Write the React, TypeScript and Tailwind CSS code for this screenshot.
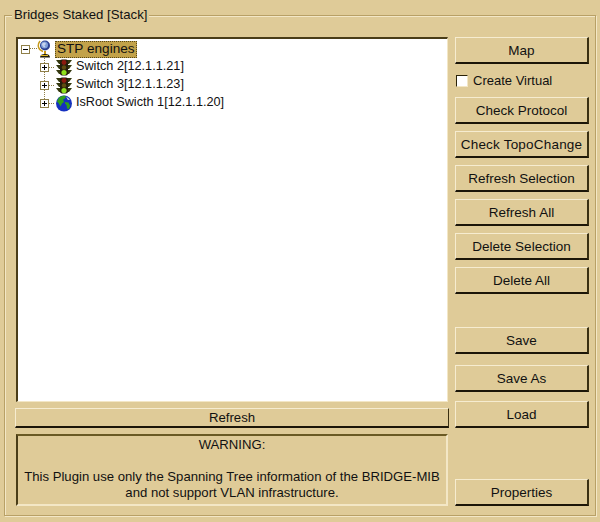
import React from "react";

const font = "font-['Liberation_Sans',Arial,sans-serif]";

const Btn: React.FC<{ label: string; className?: string }> = ({ label, className = "" }) => (
  <button
    className={`w-[134px] h-[27px] shrink-0 pt-[2px] flex items-center justify-center bg-[#dfcb98] border-t border-l border-t-[#f6ecd0] border-l-[#f6ecd0] border-b-2 border-r-2 border-b-[#1c1608] border-r-[#3a3012] text-[13.500px] text-[#111] ${className}`}
  >
    {label}
  </button>
);

const Expander: React.FC<{ open?: boolean }> = ({ open }) => (
  <svg width="9" height="9" viewBox="0 0 9 9" className="shrink-0 bg-white">
    <rect x="0.5" y="0.5" width="8" height="8" fill="#fff" stroke="#8f7f48" />
    <path d="M2 4.5h5" stroke="#000" />
    {!open && <path d="M4.5 2v5" stroke="#000" />}
  </svg>
);

const TrafficLight = () => (
  <svg width="16" height="17" viewBox="0 0 16 17" className="shrink-0">
    <path d="M0 1h16l-3 4H3zM0 6h16l-3 4H3zM0 11h16l-3 4H3z" fill="#34380f" />
    <rect x="4" y="0.500" width="8" height="16" rx="2" fill="#241e0c" />
    <circle cx="8" cy="3.500" r="2.400" fill="#8c1a0e" />
    <circle cx="8" cy="8.500" r="2.200" fill="#5f4d10" />
    <circle cx="8" cy="13.500" r="2.600" fill="#8fe01c" />
  </svg>
);

const Globe = () => (
  <svg width="18" height="17" viewBox="0 0 18 17" className="shrink-0">
    <circle cx="9" cy="8.500" r="8" fill="#1530c0" />
    <path d="M4 2.500c2-1.500 5-2 7-1.500l-1 2.500-2 1 1 2.500-2 1.500-1.500 3L3.500 8 2 6.500zM10 7l3.500.500 1 2.500 1-1-1.500 5-2-.500-.500-3.500-1.500-1.500z" fill="#2fa01c" />
    <path d="M11 1.500l4 3-2 .500z" fill="#dfeee0" />
  </svg>
);

const StandGlobe = () => (
  <svg width="16" height="18" viewBox="0 0 16 18" className="shrink-0">
    <path d="M3 1c-3 4-2 9 3 10.500" fill="none" stroke="#c69a1c" strokeWidth="1.500" />
    <circle cx="8" cy="5.500" r="5" fill="#2c3f90" />
    <circle cx="7.500" cy="5" r="3.500" fill="#7f9fd8" />
    <path d="M5.500 3l2.500-.500 1 1.500-1.500 1.500 1 1.500-1.500 .500-2-2.500z" fill="#c8d4ee" />
    <path d="M7 11h2v3H7z" fill="#c89a14" />
    <path d="M3 17.500c0-2.500 2-3.500 5-3.500s5 1 5 3.500z" fill="#1d1a08" />
    <path d="M4 15.500h7" stroke="#e0b820" />
  </svg>
);

const Row: React.FC<{ icon: React.ReactNode; label: string }> = ({ icon, label }) => (
  <div className="h-[18px] flex items-center pl-[19px]">
    <Expander />
    <span className="w-[6px] shrink-0" />
    <span className="w-[18px] flex justify-center shrink-0">{icon}</span>
    <span className="ml-[3px] text-[12.700px] text-[#111] whitespace-nowrap">{label}</span>
  </div>
);

export default function App() {
  return (
    <div className={`w-[600px] h-[522px] bg-[#dfcb98] pt-[15px] px-[4px] ${font}`}>
      <div className="relative w-[592px] h-[501px] border border-[#b8a066] shadow-[inset_1px_1px_0_#f3e7c6,1px_1px_0_#f3e7c6] pl-[11px] pt-[21px] flex gap-[5px]">
        <span className="absolute left-[7px] -top-[9px] px-[2px] bg-[#dfcb98] text-[13.200px] leading-[16px] text-[#111]">
          Bridges Staked [Stack]
        </span>

        <div className="w-[434px] flex flex-col shrink-0">
          <div className="relative w-[432px] h-[365px] bg-white border-t-2 border-l-2 border-t-[#4a3d18] border-l-[#4a3d18] border-b border-r border-b-[#f3e7c6] border-r-[#f3e7c6] pt-[1px] pl-[3px]">
            <svg width="60" height="70" className="absolute left-0 top-0" aria-hidden="true">
              <path d="M26.500 15V64M12 9.500h8M31 28.500h6M31 46.500h6M31 64.500h6" stroke="#8f7f48" strokeDasharray="1 1" fill="none" />
            </svg>
            <div className="relative h-[18px] flex items-center">
              <Expander open />
              <span className="w-[7px]" />
              <StandGlobe />
              <span className="ml-[2px] h-[17px] px-[2px] flex items-center bg-[#c2a24a] outline outline-dotted outline-[#5a4a18] -outline-offset-1 text-[13.600px] text-[#111]">
                STP engines
              </span>
            </div>
            <div className="relative">
              <Row icon={<TrafficLight />} label="Switch 2[12.1.1.21]" />
              <Row icon={<TrafficLight />} label="Switch 3[12.1.1.23]" />
              <Row icon={<Globe />} label="IsRoot Swicth 1[12.1.1.20]" />
            </div>
          </div>
          <button className="mt-[6px] -ml-[1px] w-[434px] h-[20px] shrink-0 flex items-center justify-center bg-[#dfcb98] border-t border-l border-t-[#f6ecd0] border-l-[#f6ecd0] border-b-2 border-r border-b-[#1c1608] border-r-[#3a3012] text-[13.200px] text-[#111]">
            Refresh
          </button>
          <div className="mt-[6px] w-[432px] h-[72px] pt-[1px] border-t-2 border-l-2 border-t-[#6a5a24] border-l-[#4a3d18] border-b-2 border-r-2 border-b-[#f3e7c6] border-r-[#f3e7c6] flex flex-col items-center text-center text-[13.150px] leading-[16px] text-[#111]">
            <p>WARNING:</p>
            <p className="mt-[16px] whitespace-nowrap">This Plugin use only the Spanning Tree information of the BRIDGE-MIB</p>
            <p>and not support VLAN infrastructure.</p>
          </div>
        </div>

        <div className="flex flex-col">
          <Btn label="Map" />
          <label className="h-[33px] shrink-0 flex items-center text-[13px] text-[#111]">
            <span className="w-[12px] h-[12px] ml-[1px] mr-[5px] bg-white border-t border-l border-t-[#2a2208] border-l-[#2a2208] border-b border-r border-b-[#f3e7c6] border-r-[#f3e7c6]" />
            Create Virtual
          </label>
          <div className="flex flex-col gap-[7px]">
            <Btn label="Check Protocol" />
            <Btn label="Check TopoChange" className="tracking-[0.200px]" />
            <Btn label="Refresh Selection" />
            <Btn label="Refresh All" />
            <Btn label="Delete Selection" />
            <Btn label="Delete All" />
          </div>
          <Btn label="Save" className="mt-[33px]" />
          <Btn label="Save As" className="mt-[11px]" />
          <Btn label="Load" className="mt-[9px]" />
          <Btn label="Properties" className="mt-[51px]" />
        </div>
      </div>
    </div>
  );
}
